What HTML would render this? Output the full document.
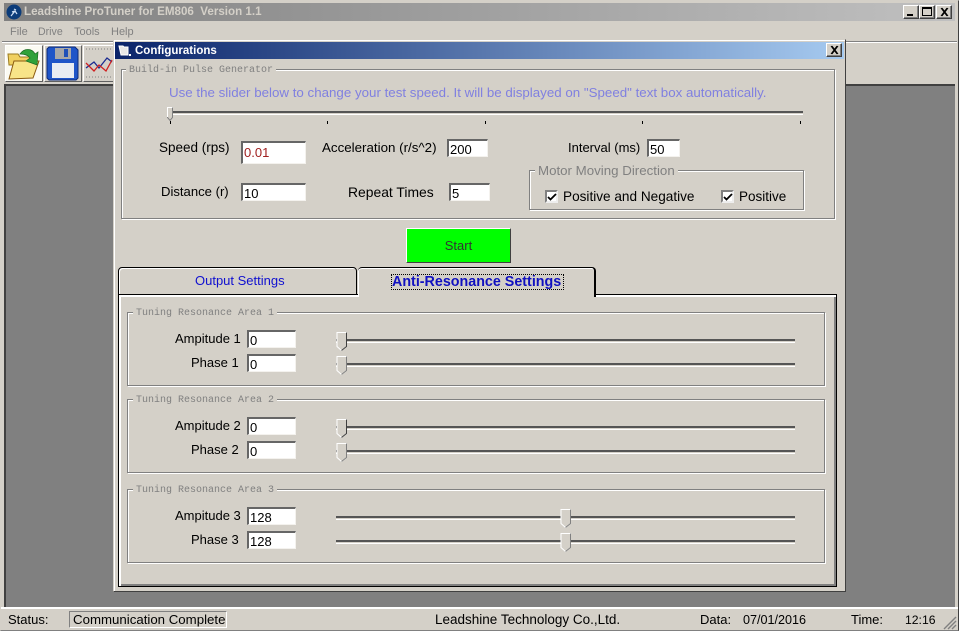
<!DOCTYPE html>
<html><head><meta charset="utf-8"><style>
html,body{margin:0;padding:0;width:959px;height:631px;overflow:hidden;background:#d4d0c8}
body{position:relative;font-family:"Liberation Sans",sans-serif;font-size:13px;color:#000}
div,span.t{position:absolute;box-sizing:border-box}
.t{white-space:nowrap;line-height:16px}
.i{background:#fff;border:1px solid;border-color:#808080 #f4f2ee #f4f2ee #808080;border-top:2px solid #666;border-left:2px solid #666;padding-left:1px;line-height:17px;font-size:13px;height:18px;overflow:hidden;white-space:nowrap}
.g{border:1px solid #808080;box-shadow:1px 1px 0 #fff,inset 1px 1px 0 #fff}
.m{font-family:"Liberation Mono",monospace;font-size:10px;color:#808080;background:#d4d0c8;padding:0 3px;line-height:12px;white-space:nowrap}
.tr{height:4px;border-top:2px solid #555;border-bottom:1px solid #fff;background:#d4d0c8}
.wb{width:16px;height:14px;background:#d4d0c8;border:1px solid;border-color:#fff #404040 #404040 #fff;box-shadow:inset -1px -1px 0 #808080}
.tick{width:1px;height:3px;background:#000;top:121px}
svg{position:absolute;overflow:visible}
</style></head><body>

<!-- main window -->
<div style="left:0;top:0;width:959px;height:631px;border:1px solid;border-color:#d4d0c8 #404040 #808080 #d4d0c8"></div>
<div style="left:4px;top:3px;width:951px;height:18px;background:linear-gradient(90deg,#808080,#c0c0c0)"></div>
<svg style="left:6px;top:4px" width="16" height="16" viewBox="0 0 16 16"><circle cx="8" cy="8" r="7.5" fill="#0b3c7a"/><path d="M5 12L9 7M8 5l2 1M6 8l3-1 2 3" stroke="#cfe0f5" stroke-width="1.2" fill="none"/></svg>
<span class="t" style="left:24px;top:4px;font-weight:bold;font-size:11.6px;color:#d4d0c8">Leadshine ProTuner for EM806&nbsp; Version 1.1</span>
<div class="wb" style="left:903px;top:5px"><div style="left:3px;top:8px;width:6px;height:2px;background:#000"></div></div>
<div class="wb" style="left:919px;top:5px"><div style="left:2px;top:1px;width:10px;height:9px;border:1px solid #000;border-top-width:2px"></div></div>
<div class="wb" style="left:936px;top:5px"><svg style="left:3px;top:2px" width="9" height="8" viewBox="0 0 9 8"><path d="M1 0l6 8M2 0l6 8M7 0L1 8M8 0L2 8" stroke="#000" fill="none"/></svg></div>

<span class="t" style="left:10px;top:24px;font-size:11px;color:#808080">File</span>
<span class="t" style="left:38px;top:24px;font-size:10.6px;color:#808080">Drive</span>
<span class="t" style="left:74px;top:24px;font-size:11px;color:#808080">Tools</span>
<span class="t" style="left:111px;top:24px;font-size:11px;color:#808080">Help</span>

<div style="left:2px;top:41px;width:955px;height:2px;background:linear-gradient(#808080 50%,#fff 50%)"></div>

<!-- toolbar -->
<div style="left:5px;top:45px;width:38px;height:37px;border:1px solid;border-color:#fff #606060 #606060 #fff;background:#fff"></div>
<svg style="left:6px;top:46px" width="36" height="35" viewBox="0 0 36 35"><rect width="36" height="35" fill="#fbfaf2"/><path d="M2 8h10l2 3h14v8H3z" fill="#f0d060" stroke="#9a7a20"/><path d="M3 33L8 15h25l-6 17z" fill="#f8e488" stroke="#8a5a10"/><path d="M14 8C18 2 26 2 29 8l3-2-1 13-11-4 4-3c-2-3-6-4-10-4z" fill="#2fa23a" stroke="#1a6a22" stroke-width=".7"/></svg>
<div style="left:44px;top:45px;width:38px;height:37px;border:1px solid;border-color:#fff #606060 #606060 #fff;background:#d4d0c8"></div>
<svg style="left:47px;top:47px" width="31" height="33" viewBox="0 0 31 33"><path d="M2 0h26l3 3v28l-2 2H2l-2-2V2z" fill="#1f55c8" stroke="#0c2a78"/><rect x="8" y="1" width="16" height="11" fill="#a8a8a8"/><rect x="17" y="2" width="4" height="8" fill="#2050b8"/><rect x="5" y="16" width="22" height="15" fill="#e8ecf2"/></svg>
<div style="left:83px;top:45px;width:31px;height:37px;border:1px solid;border-color:#fff #606060 #606060 #fff"></div>
<svg style="left:85px;top:47px" width="28" height="33" viewBox="0 0 28 33"><path d="M1 2h27M1 30h27" stroke="#808080" stroke-width="1" stroke-dasharray="1 2" fill="none"/><path d="M1 21L9 15l5 6 8-10 5 4" stroke="#1a2a90" stroke-width="1.300" fill="none"/><path d="M1 16l8 8 5-6 7 6 6-11" stroke="#d02020" stroke-width="1.300" fill="none"/></svg>

<!-- client -->
<div style="left:4px;top:84px;width:951px;height:524px;background:#808080;border-top:2px solid #404040;border-left:2px solid #404040"></div>
<!-- status bar -->
<div style="left:1px;top:607px;width:957px;height:2px;background:#fff"></div>
<div style="left:1px;top:609px;width:957px;height:21px;background:#d4d0c8"></div>
<span class="t" style="left:8px;top:612px">Status:</span>
<div style="left:69px;top:611px;width:158px;height:17px;border:1px solid;border-color:#808080 #fff #fff #808080"></div>
<span class="t" style="left:73px;top:612px;font-size:13.25px">Communication Complete</span>
<span class="t" style="left:435px;top:612px;font-size:13.5px">Leadshine Technology Co.,Ltd.</span>
<span class="t" style="left:700px;top:612px">Data:</span>
<span class="t" style="left:743px;top:612px;font-size:12.6px">07/01/2016</span>
<span class="t" style="left:851px;top:612px">Time:</span>
<span class="t" style="left:905px;top:612px;font-size:12.2px">12:16</span>
<svg style="left:943px;top:616px" width="14" height="14" viewBox="0 0 14 14"><path d="M13 1L1 13M13 5L5 13M13 9L9 13" stroke="#808080" stroke-width="1.400"/></svg>

<!-- dialog -->
<div style="left:113px;top:39px;width:733px;height:553px;background:#d4d0c8;border:1px solid;border-color:#d4d0c8 #404040 #404040 #d4d0c8;box-shadow:inset 1px 1px 0 #fff"></div>
<div style="left:115px;top:42px;width:729px;height:17px;background:linear-gradient(90deg,#0a246a,#a6caf0)"></div>
<svg style="left:118px;top:44px" width="14" height="13" viewBox="0 0 14 13"><path d="M1 2h4l1 1h4v8H3z" fill="#e8e8e8" stroke="#fff"/><rect x="11" y="10" width="2" height="2" fill="#fff"/></svg>
<span class="t" style="left:135px;top:43px;font-size:11.5px;font-weight:bold;color:#fff">Configurations</span>
<div class="wb" style="left:826px;top:43px"><svg style="left:3px;top:2px" width="9" height="8" viewBox="0 0 9 8"><path d="M1 0l6 8M2 0l6 8M7 0L1 8M8 0L2 8" stroke="#000" fill="none"/></svg></div>

<!-- pulse group -->
<div class="g" style="left:121px;top:69px;width:714px;height:150px"></div>
<div class="m" style="left:126px;top:65px">Build-in Pulse Generator</div>
<span class="t" style="left:169px;top:85px;color:#8080e0;font-size:13.33px">Use the slider below to change your test speed. It will be displayed on "Speed" text box automatically.</span>
<div class="tr" style="left:168px;top:111px;width:635px"></div>
<svg style="left:166px;top:107px" width="9" height="15" viewBox="0 0 9 15"><path d="M1.500 .5h5v10l-2.500 3-2.500-3z" fill="#d4d0c8" stroke="#808080"/><path d="M1.500 10V.5h5" stroke="#fff" fill="none"/></svg>
<div class="tick" style="left:170px"></div><div class="tick" style="left:327px"></div><div class="tick" style="left:485px"></div><div class="tick" style="left:642px"></div><div class="tick" style="left:800px"></div>

<span class="t" style="left:159px;top:140px;font-size:13.5px">Speed (rps)</span>
<div class="i" style="left:241px;top:141px;width:65px;height:23px;color:#a02020;line-height:20px">0.01</div>
<span class="t" style="left:322px;top:140px;font-size:13.35px">Acceleration (r/s^2)</span>
<div class="i" style="left:447px;top:139px;width:41px">200</div>
<span class="t" style="left:568px;top:140px">Interval (ms)</span>
<div class="i" style="left:647px;top:139px;width:33px">50</div>
<span class="t" style="left:161px;top:184px;font-size:13.1px">Distance (r)</span>
<div class="i" style="left:241px;top:183px;width:65px">10</div>
<span class="t" style="left:348px;top:184px;font-size:13.9px">Repeat Times</span>
<div class="i" style="left:449px;top:183px;width:41px">5</div>

<div class="g" style="left:529px;top:170px;width:275px;height:40px"></div>
<div style="left:535px;top:163px;background:#d4d0c8;padding:0 3px;color:#808080;line-height:16px;white-space:nowrap;font-size:13.3px">Motor Moving Direction</div>
<div style="left:545px;top:190px;width:13px;height:13px;background:#fff;border:2px solid;border-color:#808080 #eee #eee #808080"><svg style="left:1px;top:1px" width="8" height="8" viewBox="0 0 8 8"><path d="M0 4l2.500 2.500L8 1" stroke="#000" stroke-width="1.800" fill="none"/></svg></div>
<span class="t" style="left:563px;top:189px;font-size:13.6px">Positive and Negative</span>
<div style="left:721px;top:190px;width:13px;height:13px;background:#fff;border:2px solid;border-color:#808080 #eee #eee #808080"><svg style="left:1px;top:1px" width="8" height="8" viewBox="0 0 8 8"><path d="M0 4l2.500 2.500L8 1" stroke="#000" stroke-width="1.800" fill="none"/></svg></div>
<span class="t" style="left:739px;top:189px;font-size:13.5px">Positive</span>

<!-- start -->
<div style="left:406px;top:228px;width:105px;height:35px;background:#00ff00;border:1px solid;border-color:#fff #404040 #404040 #fff;text-align:center;line-height:33px;color:#333">Start</div>

<!-- tabs -->
<div style="left:118px;top:294px;width:719px;height:293px;background:#d4d0c8;border:1px solid #000;box-shadow:inset 2px 2px 0 #fff,inset -2px -2px 0 #808080"></div>
<div style="left:118px;top:267px;width:239px;height:28px;background:#d4d0c8;border:1px solid #000;border-radius:4px 4px 0 0;box-shadow:inset 1px 1px 0 #fff"></div>
<span class="t" style="left:195px;top:273px;color:#1010d0">Output Settings</span>
<div style="left:358px;top:267px;width:238px;height:30px;background:#d4d0c8;border-top:1px solid #000;border-right:2px solid #000;border-radius:4px 4px 0 0;box-shadow:inset 0 1px 0 #fff,inset 1px 0 0 #fff"></div>
<div style="left:391px;top:274px;width:173px;height:16px;border:1px dotted #000"></div>
<span class="t" style="left:392px;top:274px;color:#1010c0;font-weight:bold;font-size:14.3px">Anti-Resonance Settings</span>

<!-- Area 1 -->
<div class="g" style="left:127px;top:312px;width:698px;height:74px"></div>
<div class="m" style="left:133px;top:308px">Tuning Resonance Area 1</div>
<span class="t" style="left:175px;top:331px">Ampitude 1</span>
<div class="i" style="left:247px;top:330px;width:49px">0</div>
<span class="t" style="left:191px;top:355px">Phase 1</span>
<div class="i" style="left:247px;top:354px;width:49px">0</div>
<div class="tr" style="left:336px;top:339px;width:459px"></div>
<div class="tr" style="left:336px;top:363px;width:459px"></div>
<svg style="left:336px;top:332px" width="12" height="20" viewBox="0 0 12 20"><path d="M1 .5h9.500v14l-5 4-4.500-4z" fill="#d4d0c8" stroke="#fff"/><path d="M10.500 .5v14l-5 4" stroke="#404040" fill="none"/></svg>
<svg style="left:336px;top:356px" width="12" height="20" viewBox="0 0 12 20"><path d="M1 .5h9.500v14l-5 4-4.500-4z" fill="#d4d0c8" stroke="#fff"/><path d="M10.500 .5v14l-5 4" stroke="#808080" fill="none"/></svg>

<!-- Area 2 -->
<div class="g" style="left:127px;top:399px;width:698px;height:74px"></div>
<div class="m" style="left:133px;top:395px">Tuning Resonance Area 2</div>
<span class="t" style="left:175px;top:418px">Ampitude 2</span>
<div class="i" style="left:247px;top:417px;width:49px">0</div>
<span class="t" style="left:191px;top:442px">Phase 2</span>
<div class="i" style="left:247px;top:441px;width:49px">0</div>
<div class="tr" style="left:336px;top:426px;width:459px"></div>
<div class="tr" style="left:336px;top:450px;width:459px"></div>
<svg style="left:336px;top:419px" width="12" height="20" viewBox="0 0 12 20"><path d="M1 .5h9.500v14l-5 4-4.500-4z" fill="#d4d0c8" stroke="#fff"/><path d="M10.500 .5v14l-5 4" stroke="#404040" fill="none"/></svg>
<svg style="left:336px;top:443px" width="12" height="20" viewBox="0 0 12 20"><path d="M1 .5h9.500v14l-5 4-4.500-4z" fill="#d4d0c8" stroke="#fff"/><path d="M10.500 .5v14l-5 4" stroke="#808080" fill="none"/></svg>

<!-- Area 3 -->
<div class="g" style="left:127px;top:489px;width:698px;height:74px"></div>
<div class="m" style="left:133px;top:485px">Tuning Resonance Area 3</div>
<span class="t" style="left:175px;top:508px">Ampitude 3</span>
<div class="i" style="left:247px;top:507px;width:49px">128</div>
<span class="t" style="left:191px;top:532px">Phase 3</span>
<div class="i" style="left:247px;top:531px;width:49px">128</div>
<div class="tr" style="left:336px;top:516px;width:459px"></div>
<div class="tr" style="left:336px;top:540px;width:459px"></div>
<svg style="left:560px;top:509px" width="12" height="20" viewBox="0 0 12 20"><path d="M1 .5h9.500v14l-5 4-4.500-4z" fill="#d4d0c8" stroke="#fff"/><path d="M10.500 .5v14l-5 4" stroke="#808080" fill="none"/></svg>
<svg style="left:560px;top:533px" width="12" height="20" viewBox="0 0 12 20"><path d="M1 .5h9.500v14l-5 4-4.500-4z" fill="#d4d0c8" stroke="#fff"/><path d="M10.500 .5v14l-5 4" stroke="#808080" fill="none"/></svg>

</body></html>
